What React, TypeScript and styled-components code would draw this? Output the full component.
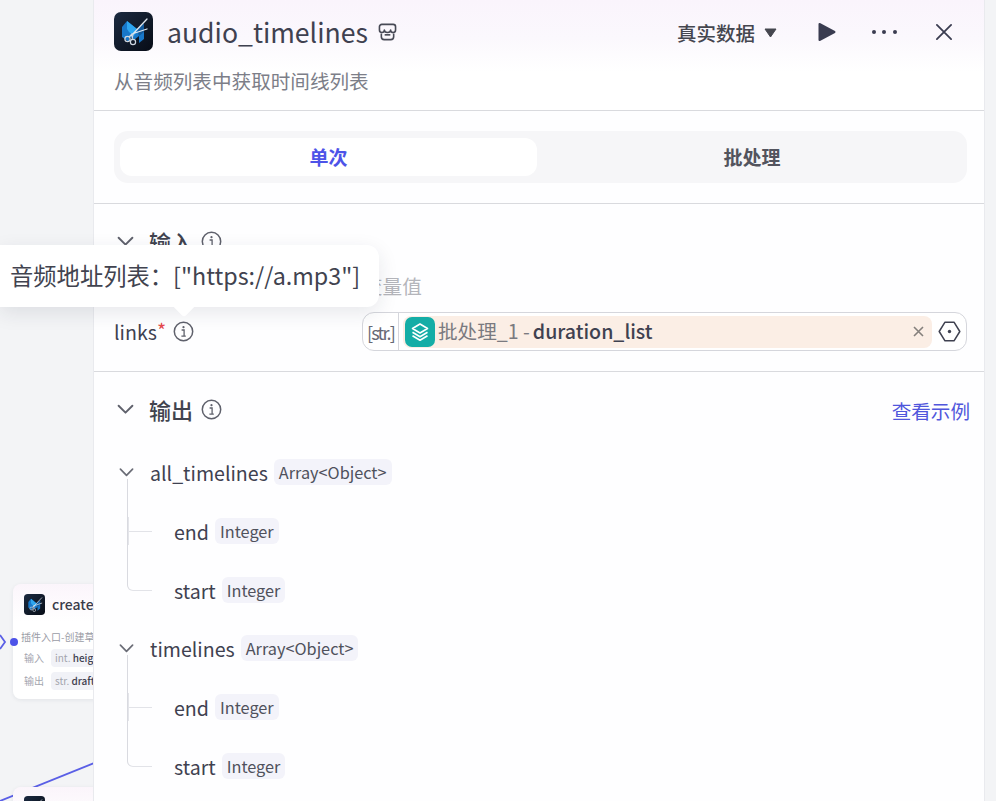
import { ReactNode } from 'react';
import styled, { createGlobalStyle } from 'styled-components';

const GlobalStyle = createGlobalStyle`
  html, body {
    margin: 0;
    padding: 0;
    background: #f3f4f6;
    overflow: hidden;
  }
  * {
    box-sizing: border-box;
  }
`;

const Page = styled.div`
  display: flex;
  width: 996px;
  height: 801px;
  overflow: hidden;
  background: #f3f4f6;
  font-family: "Noto Sans CJK SC", "Noto Sans", sans-serif;
  color: #3f4150;
  position: relative;
`;

const Canvas = styled.aside`
  position: relative;
  flex: 0 0 93px;
  height: 100%;
  overflow: hidden;
`;

const CanvasNode = styled.div<{ $top: number }>`
  position: absolute;
  left: 13px;
  top: ${p => p.$top}px;
  width: 180px;
  height: 115px;
  border-radius: 8px;
  padding: 9px 11px;
  background: linear-gradient(180deg, #fbf5fb 0, #ffffff 38px);
  box-shadow: 0 1px 4px rgba(30, 35, 60, 0.08);
`;

const NodeHead = styled.div`
  display: flex;
  align-items: center;
  gap: 7px;
  font-size: 14px;
  font-weight: 500;
  color: #3a3c4a;
  line-height: 22px;
`;

const NodeDesc = styled.div`
  margin: 15px 0 0 -3px;
  font-size: 10px;
  line-height: 14px;
  color: #9a9ca6;
  white-space: nowrap;
`;

const NodeRow = styled.div`
  display: flex;
  align-items: center;
  gap: 7px;
  margin-top: 5px;
  font-size: 10px;
  line-height: 18px;
  color: #a3a5ae;
  white-space: nowrap;
`;

const NodeChip = styled.span`
  padding: 0 4px;
  border-radius: 4px;
  background: #f1f2f7;
  b {
    font-weight: 500;
    color: #3f4150;
  }
`;

const Port = styled.span`
  position: absolute;
  left: 10px;
  top: 638px;
  width: 8px;
  height: 8px;
  border-radius: 50%;
  background: #4d53e8;
`;

const Wires = styled.svg`
  position: absolute;
  left: 0;
  top: 0;
`;

const Panel = styled.main`
  flex: 0 0 892px;
  height: 100%;
  background: #fefeff;
  border-left: 1px solid #e9eaee;
  border-right: 1px solid #e9eaee;
  overflow: hidden;
`;

const Header = styled.header`
  height: 111px;
  padding: 12px 11px 0 20px;
  background: linear-gradient(180deg, #faf4fc 0, #fbf8fd 38px, #ffffff 72px);
  border-bottom: 1px solid #d9dade;
`;

const TitleRow = styled.div`
  display: flex;
  align-items: center;
  height: 39px;
`;

const Title = styled.h1`
  margin: 0 10px 0 14px;
  font-size: 26.6px;
  line-height: 39px;
  font-weight: 400;
  color: #3f4150;
`;

const Actions = styled.div`
  margin-left: auto;
  display: flex;
  align-items: center;
`;

const DataSelect = styled.div`
  display: flex;
  align-items: center;
  gap: 9px;
  font-size: 19.5px;
  font-weight: 500;
  color: #45464f;
  margin-right: 41px;
  position: relative;
  top: 1px;
`;

const ActionIcon = styled.svg<{ $gap: number }>`
  display: block;
  margin-right: ${p => p.$gap}px;
`;

const Desc = styled.p`
  margin: 16px 0 0;
  font-size: 19.6px;
  line-height: 28px;
  color: #7c7e88;
`;

const TabsWrap = styled.div`
  padding: 20px 17px 20px 20px;
  border-bottom: 1px solid #d9dade;
`;

const Tabs = styled.div`
  display: grid;
  grid-template-columns: 417px 1fr;
  height: 52px;
  padding: 7px 6px;
  border-radius: 14px;
  background: #f6f6f8;
`;

const Tab = styled.div<{ $active?: boolean }>`
  display: flex;
  align-items: center;
  justify-content: center;
  padding: 0 0 2px ${p => (p.$active ? 0 : 6)}px;
  border-radius: 12px;
  font-size: 19px;
  font-weight: 700;
  color: ${p => (p.$active ? '#4d53e8' : '#53545e')};
  background: ${p => (p.$active ? '#ffffff' : 'transparent')};
`;

const Section = styled.section`
  position: relative;
`;

const InputSection = styled(Section)`
  height: 168px;
  padding: 23px 17px 0 20px;
  border-bottom: 1px solid #d9dade;
`;

const SectionHead = styled.div`
  display: flex;
  align-items: center;
  height: 28px;
  padding-left: 3px;
`;

const SectionTitle = styled.h2`
  margin: 0 8px 0 15px;
  font-size: 22px;
  line-height: 28px;
  font-weight: 500;
  color: #41434f;
`;

const ColumnHeads = styled.div`
  display: flex;
  margin: 17px 0 0 249px;
  font-size: 19.6px;
  line-height: 28px;
  color: #b4b5bb;
`;

const LinkRow = styled.div`
  display: flex;
  align-items: center;
  height: 39px;
  margin-top: 12px;
`;

const LinkLabel = styled.div`
  flex: 0 0 248px;
  display: flex;
  align-items: center;
  font-size: 19.6px;
  color: #3f4150;
  i {
    font-style: normal;
    color: #e5484d;
    margin-right: 7px;
    align-self: flex-start;
    line-height: 26px;
  }
`;

const RefInput = styled.div`
  flex: 1;
  display: flex;
  align-items: center;
  height: 39px;
  border: 1px solid #d5d6dc;
  border-radius: 12px;
  background: #ffffff;
`;

const TypeCell = styled.div`
  flex: 0 0 36px;
  height: 100%;
  display: flex;
  align-items: center;
  justify-content: center;
  border-right: 1px solid #d5d6dc;
  font-size: 18px;
  letter-spacing: -1.8px;
  color: #666874;
`;

const RefTag = styled.div`
  flex: 1;
  display: flex;
  align-items: center;
  height: 32px;
  margin-left: 4px;
  padding: 0 8px 2px 1px;
  border-radius: 8px;
  background: #fbeee5;
  font-size: 19.6px;
  white-space: nowrap;
  em {
    font-style: normal;
    color: #7a7a80;
  }
  b {
    font-weight: 500;
    color: #3f4150;
    margin-left: 3px;
  }
`;

const TealIcon = styled.span`
  flex: 0 0 30px;
  width: 30px;
  height: 30px;
  margin: 2px 3px 0 1px;
  display: flex;
  align-items: center;
  justify-content: center;
  border-radius: 7px;
  background: #14ada6;
`;

const Remove = styled.svg`
  margin: 2px 0 0 auto;
`;

const HexSlot = styled.div`
  flex: 0 0 34px;
  display: flex;
  align-items: center;
  justify-content: center;
`;

const Tooltip = styled.div`
  position: absolute;
  left: 0;
  top: 245px;
  width: 379px;
  height: 62px;
  display: flex;
  align-items: center;
  padding: 0 0 2px 10px;
  border-radius: 0 12px 12px 0;
  background: #ffffff;
  box-shadow: 0 6px 20px rgba(30, 35, 60, 0.1);
  font-size: 23.3px;
  color: #41434f;
  white-space: nowrap;
  z-index: 3;
  &::after {
    content: '';
    position: absolute;
    left: 176px;
    top: 53px;
    width: 16px;
    height: 16px;
    border-radius: 3px;
    background: #ffffff;
    transform: rotate(45deg);
  }
`;

const OutputSection = styled(Section)`
  padding: 23px 14px 0 20px;
`;

const ExampleLink = styled.a`
  margin-left: auto;
  font-size: 19.6px;
  color: #5056dc;
  position: relative;
  top: 1px;
`;

const TreeGroup = styled.div`
  margin-left: 0;
`;

const ParentRow = styled.div<{ $mt: number }>`
  display: flex;
  align-items: center;
  height: 28px;
  margin-top: ${p => p.$mt}px;
  padding-left: 5px;
`;

const FieldName = styled.span`
  font-size: 19.6px;
  color: #3f4150;
  margin-right: 6px;
`;

const Badge = styled.span`
  display: inline-flex;
  align-items: center;
  height: 26px;
  padding: 0 5px;
  border-radius: 6px;
  background: #f3f3fa;
  font-size: 16.3px;
  color: #4f515c;
`;

const ChildRow = styled.div`
  position: relative;
  display: flex;
  align-items: center;
  height: 28px;
  margin-top: 31px;
  padding-left: 60px;
  &::before {
    content: '';
    position: absolute;
    left: 13px;
    top: -38px;
    width: 24px;
    height: 52px;
    border-left: 1px solid #d9dae0;
    border-bottom: 1px solid #e2e3e8;
  }
  &:nth-child(2)::after {
    content: '';
    position: absolute;
    left: 14px;
    top: 0;
    width: 1px;
    height: 28px;
    background: #e4e5ea;
  }
  & + &::before {
    top: -45px;
    height: 59px;
    border-bottom-left-radius: 6px;
  }
`;

const Spacer = styled.div`
  flex: 0 0 16px;
  height: 100%;
`;

const Info = () => (
  <svg width="21" height="21" viewBox="0 0 21 21" fill="none">
    <circle cx="10.5" cy="10.5" r="9.2" stroke="#5f616c" strokeWidth="1.5" />
    <circle cx="10.5" cy="6.2" r="1.1" fill="#5f616c" />
    <path d="M8.6 9h2.5v6M8.4 15.2h4.4" stroke="#5f616c" strokeWidth="1.3" />
  </svg>
);

const Chevron = ({ size = 16, color = '#5f616c' }: { size?: number; color?: string }) => (
  <svg width={size} height={size} viewBox="0 0 16 16" fill="none">
    <path d="M1.5 4.5 8 11l6.5-6.5" stroke={color} strokeWidth="1.8" strokeLinecap="round" strokeLinejoin="round" />
  </svg>
);

const PluginLogo = ({ size }: { size: number }) => (
  <svg width={size} height={size} viewBox="0 0 39 39" style={{ flex: 'none' }}>
    <defs>
      <linearGradient id="logoBg" x1="0" y1="0" x2="1" y2="1">
        <stop offset="0" stopColor="#1c2a40" />
        <stop offset="1" stopColor="#070c16" />
      </linearGradient>
    </defs>
    <rect width="39" height="39" rx="7" fill="url(#logoBg)" />
    <path d="M8 15 13 9l10 8 7-5v15l-5 4v-7l-5 4-5-4v6l-7-5z" fill="#1877c9" />
    <path d="M13 9l10 8-3 7-5-4-2-3z" fill="#2ea6f0" />
    <path d="M23 17l7-5v8l-5 4z" fill="#135a9c" />
    <path d="M33 7 17 24M33 17 18 22" stroke="#dfe7ef" strokeWidth="1.3" strokeLinecap="round" />
    <circle cx="13.5" cy="27" r="2.6" fill="none" stroke="#cfd8e2" strokeWidth="1.2" />
    <circle cx="19" cy="30" r="2.6" fill="none" stroke="#cfd8e2" strokeWidth="1.2" />
    <path d="M15 25l3-3M18 28l1-6" stroke="#cfd8e2" strokeWidth="1.2" />
  </svg>
);

const StoreIcon = () => (
  <svg width="19" height="18" viewBox="0 0 20 19" fill="none" stroke="#474955" strokeWidth="1.7" strokeLinejoin="round">
    <path d="M4 1.5h12a2.5 2.5 0 0 1 2.5 2.5v3.5a2.6 2.6 0 0 1-5.2 0 3.3 2.6 0 0 1-6.6 0 2.6 2.6 0 0 1-5.2 0V4A2.5 2.5 0 0 1 4 1.5z" />
    <path d="M3.5 11v3.5a3 3 0 0 0 3 3h7a3 3 0 0 0 3-3V11" />
    <path d="M7 12.5h6" />
  </svg>
);

type Field = { name: string; type: string };

const Branch = ({ name, type, fields, mt }: { name: string; type: string; fields: Field[]; mt: number }) => (
  <TreeGroup>
    <ParentRow $mt={mt}>
      <Chevron size={15} color="#6a6c76" />
      <Spacer />
      <FieldName>{name}</FieldName>
      <Badge>{type}</Badge>
    </ParentRow>
    {fields.map(f => (
      <ChildRow key={f.name}>
        <FieldName>{f.name}</FieldName>
        <Badge>{f.type}</Badge>
      </ChildRow>
    ))}
  </TreeGroup>
);

const leafFields: Field[] = [
  { name: 'end', type: 'Integer' },
  { name: 'start', type: 'Integer' },
];

const Head = ({ title, children }: { title: string; children?: ReactNode }) => (
  <SectionHead>
    <Chevron size={17} />
    <SectionTitle>{title}</SectionTitle>
    <Info />
    {children}
  </SectionHead>
);

const App = () => {
  return (
    <Page>
      <GlobalStyle />
      <Canvas>
        <Wires width="94" height="801" viewBox="0 0 94 801" fill="none">
          <path d="M0 801 94 763" stroke="#5a5fe6" strokeWidth="1.8" />
          <path d="M0 635l5 7-5 7" stroke="#5a5fe6" strokeWidth="1.8" />
        </Wires>
        <CanvasNode $top={584}>
          <NodeHead>
            <PluginLogo size={21} />
            create_draft
          </NodeHead>
          <NodeDesc>插件入口-创建草稿</NodeDesc>
          <NodeRow>
            输入
            <NodeChip>int. <b>height</b></NodeChip>
          </NodeRow>
          <NodeRow>
            输出
            <NodeChip>str. <b>draft_url</b></NodeChip>
          </NodeRow>
        </CanvasNode>
        <CanvasNode $top={787}>
          <NodeHead>
            <PluginLogo size={21} />
          </NodeHead>
        </CanvasNode>
        <Port />
      </Canvas>
      <Panel>
        <Header>
          <TitleRow>
            <PluginLogo size={39} />
            <Title>audio_timelines</Title>
            <StoreIcon />
            <Actions>
              <DataSelect>
                真实数据
                <svg width="13" height="10" viewBox="0 0 13 10">
                  <path d="M1 1h11L6.5 9z" fill="#45464f" stroke="#45464f" strokeWidth="1" strokeLinejoin="round" />
                </svg>
              </DataSelect>
              <ActionIcon $gap={35} width="18" height="20" viewBox="0 0 18 20">
                <path d="M1.5 2v16L16.5 10z" fill="#3a3c50" stroke="#3a3c50" strokeWidth="2" strokeLinejoin="round" />
              </ActionIcon>
              <ActionIcon $gap={38} width="26" height="6" viewBox="0 0 26 6">
                <circle cx="3" cy="3" r="2" fill="#3a3c50" />
                <circle cx="13" cy="3" r="2" fill="#3a3c50" />
                <circle cx="24" cy="3" r="2" fill="#3a3c50" />
              </ActionIcon>
              <ActionIcon $gap={20} width="18" height="18" viewBox="0 0 19 19">
                <path d="M2 2l15 15M17 2 2 17" stroke="#3a3c50" strokeWidth="1.9" strokeLinecap="round" />
              </ActionIcon>
            </Actions>
          </TitleRow>
          <Desc>从音频列表中获取时间线列表</Desc>
        </Header>
        <TabsWrap>
          <Tabs>
            <Tab $active>单次</Tab>
            <Tab>批处理</Tab>
          </Tabs>
        </TabsWrap>
        <InputSection>
          <Head title="输入" />
          <ColumnHeads>变量值</ColumnHeads>
          <LinkRow>
            <LinkLabel>
              links<i>*</i>
              <Info />
            </LinkLabel>
            <RefInput>
              <TypeCell>[str.]</TypeCell>
              <RefTag>
                <TealIcon>
                  <svg width="20" height="20" viewBox="0 0 20 20" fill="none" stroke="#ffffff" strokeWidth="1.6" strokeLinejoin="round">
                    <path d="M10 2 17.5 6.5 10 11 2.5 6.5z" />
                    <path d="M2.5 10.2 10 14.7l7.5-4.5M2.5 13.8 10 18.3l7.5-4.5" />
                  </svg>
                </TealIcon>
                <em>批处理_1 -</em>
                <b>duration_list</b>
                <Remove width="11" height="11" viewBox="0 0 11 11">
                  <path d="M1 1l9 9M10 1l-9 9" stroke="#85807c" strokeWidth="1.6" />
                </Remove>
              </RefTag>
              <HexSlot>
                <svg width="23" height="21" viewBox="0 0 23 21" fill="none">
                  <path d="M7 1.2h9l5.8 9.3L16 19.8H7L1.2 10.5z" stroke="#3f4150" strokeWidth="1.5" strokeLinejoin="round" />
                  <circle cx="11.5" cy="10.5" r="1.7" fill="#3f4150" />
                </svg>
              </HexSlot>
            </RefInput>
          </LinkRow>
        </InputSection>
        <OutputSection>
          <Head title="输出">
            <ExampleLink>查看示例</ExampleLink>
          </Head>
          <Branch name="all_timelines" type="Array<Object>" fields={leafFields} mt={35} />
          <Branch name="timelines" type="Array<Object>" fields={leafFields} mt={30} />
        </OutputSection>
      </Panel>
      <Tooltip>音频地址列表：["https://a.mp3"]</Tooltip>
    </Page>
  );
};

export default App;
